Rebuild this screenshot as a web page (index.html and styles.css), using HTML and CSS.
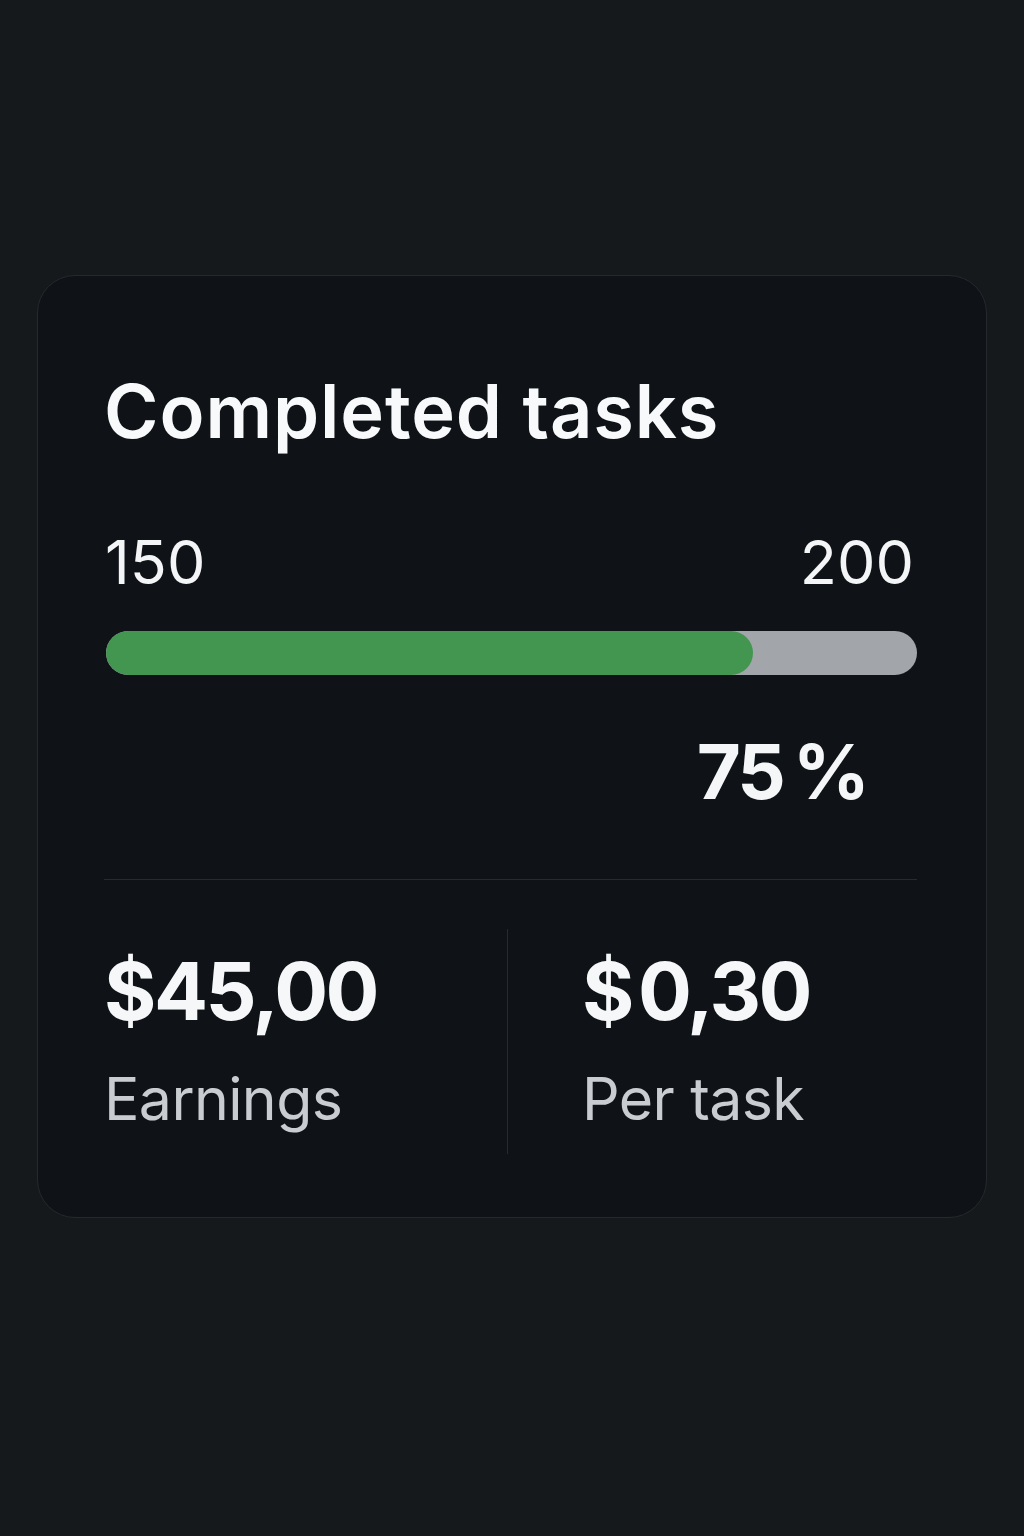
FILE: index.html
```html
<!DOCTYPE html>
<html lang="en">
<head>
<meta charset="utf-8">
<link rel="stylesheet" href="styles.css">
</head>
<body>
<main class="page">
  <section class="card">
    <h1 class="title">Completed tasks</h1>
    <div class="range">
      <span>150</span>
      <span>200</span>
    </div>
    <div class="track"><div class="fill" style="width: 79.8%"></div></div>
    <div class="percent">75<span class="pct-sign">%</span></div>
    <hr class="divider">
    <div class="stats">
      <div class="stat">
        <div class="value">$45,00</div>
        <div class="label">Earnings</div>
      </div>
      <div class="stat stat-right">
        <div class="value">$<span class="gap"></span>0,30</div>
        <div class="label">Per task</div>
      </div>
    </div>
  </section>
</main>
</body>
</html>
```

FILE: styles.css
```css
html, body {
  margin: 0;
  padding: 0;
}
body {
  background: #15191c;
  font-family: Inter, "Noto Sans", "Liberation Sans", sans-serif;
  color: #f6f7f8;
  width: 1024px;
  height: 1536px;
}
.page {
  padding: 275px 37px 0 37px;
}
.card {
  box-sizing: border-box;
  width: 950px;
  height: 943px;
  background: #0f1317;
  border: 1.5px solid #25292d;
  border-radius: 38px;
  padding: 98px 69px 0 66px;
  display: flex;
  flex-direction: column;
}
.title {
  margin: 0;
  font-size: 74px;
  line-height: 1;
  font-weight: 600;
  letter-spacing: 0.9px;
  color: #f8f9fa;
}
.range {
  margin-top: 84px;
  display: flex;
  justify-content: space-between;
  font-size: 61px;
  line-height: 1;
  font-weight: 400;
  color: #f4f5f6;
  padding-left: 1px;
  padding-right: 3px;
}
.track {
  margin-top: 38px;
  height: 44px;
  border-radius: 22px;
  background: #a2a5aa;
  overflow: hidden;
  margin-left: 2px;
}
.fill {
  height: 100%;
  background: #43964f;
  border-radius: 22px;
}
.percent {
  margin-top: 58px;
  align-self: flex-end;
  margin-right: 50px;
  font-size: 76px;
  line-height: 1;
  font-weight: 700;
  color: #f5f6f7;
  letter-spacing: -3px;
}
.pct-sign {
  margin-left: 10px;
}
.divider {
  margin: 70px 0 0 0;
  border: 0;
  height: 1px;
  background: #262b30;
}
.stats {
  margin-top: 49px;
  display: grid;
  grid-template-columns: 403px 1fr;
  height: 225px;
}
.stat {
  padding-top: 22px;
}
.stat-right {
  border-left: 1px solid #262b30;
  padding-left: 74px;
}
.value {
  font-size: 80px;
  line-height: 1;
  font-weight: 700;
  color: #f6f7f8;
  letter-spacing: -2.5px;
}
.gap {
  display: inline-block;
  width: 6px;
}
.label {
  margin-top: 38px;
  font-size: 59px;
  line-height: 1;
  font-weight: 400;
  color: #c9ccd0;
  letter-spacing: -0.6px;
}
```
